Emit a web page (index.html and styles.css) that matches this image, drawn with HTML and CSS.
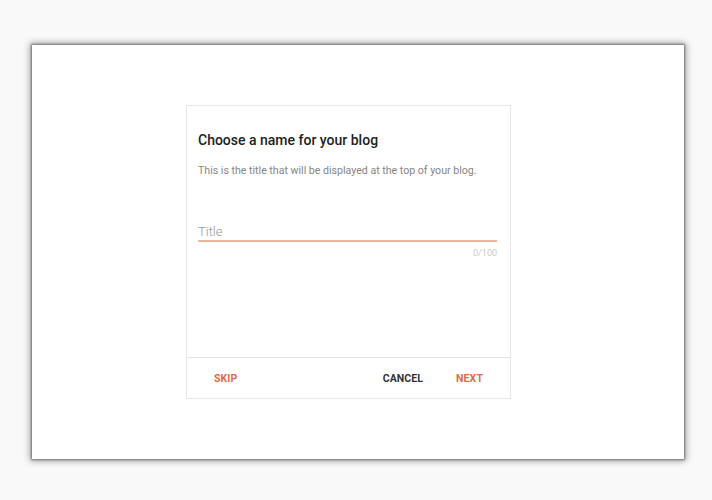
FILE: index.html
```html
<!DOCTYPE html>
<html lang="en">
<head>
<meta charset="utf-8">
<title>Choose a name for your blog</title>
<link rel="stylesheet" href="styles.css">
</head>
<body>
<div class="frame">
  <div class="dialog">
    <div class="dialog-body">
      <h1 class="dialog-title">Choose a name for your blog</h1>
      <p class="dialog-desc">This is the title that will be displayed at the top of your blog.</p>
      <div class="field">
        <div class="field-input">Title</div>
      </div>
      <div class="counter">0/100</div>
    </div>
    <div class="dialog-footer">
      <button class="btn btn-accent">SKIP</button>
      <div class="spacer"></div>
      <button class="btn btn-dark">CANCEL</button>
      <button class="btn btn-accent">NEXT</button>
    </div>
  </div>
</div>
</body>
</html>
```
FILE: styles.css
```css
html, body {
  margin: 0;
  padding: 0;
}
body {
  background: #f9f9f9;
  font-family: Roboto, "Liberation Sans", sans-serif;
  width: 712px;
  height: 500px;
  overflow: hidden;
  padding-top: 45px;
  box-sizing: border-box;
}
.frame {
  margin-left: 32px;
  width: 652px;
  height: 414px;
  background: #fff;
  box-shadow: 0 0 2px 1px rgba(0,0,0,0.4), 0 0 7px 2px rgba(0,0,0,0.35);
  padding-top: 60px;
  box-sizing: border-box;
}
.dialog {
  margin-left: 154px;
  width: 325px;
  height: 294px;
  box-sizing: border-box;
  border: 1px solid #e6e6e6;
  background: #fff;
  display: flex;
  flex-direction: column;
}
.dialog-body {
  flex: 1;
  padding: 24px 13px 0 11px;
  display: flex;
  flex-direction: column;
}
.dialog-title {
  margin: 0;
  font-size: 14px;
  line-height: 20px;
  font-weight: 500;
  color: #222;
}
.dialog-desc {
  margin: 13px 0 0;
  font-size: 10.6px;
  line-height: 16px;
  font-weight: 400;
  color: #858585;
}
.field {
  margin-top: 44px;
}
.field-input {
  font-size: 13px;
  line-height: 17px;
  font-weight: 300;
  color: #9a9a9a;
  border-bottom: 2px solid #eab8a0;
}
.counter {
  margin-top: 5px;
  align-self: flex-end;
  font-size: 9px;
  line-height: 12px;
  color: #c8c8c8;
}
.dialog-footer {
  height: 39px;
  border-top: 1px solid #e4e4e4;
  display: flex;
  align-items: center;
  padding: 1px 27px 0;
  box-sizing: content-box;
}
.spacer {
  flex: 1;
}
.btn {
  border: 0;
  background: none;
  padding: 0;
  font-family: Roboto, "Liberation Sans", sans-serif;
  font-size: 10.5px;
  font-weight: 700;
  letter-spacing: 0.1px;
  line-height: 14px;
}
.btn-accent {
  color: #e06a48;
}
.btn-dark {
  color: #333;
  margin-right: 33px;
}
```
